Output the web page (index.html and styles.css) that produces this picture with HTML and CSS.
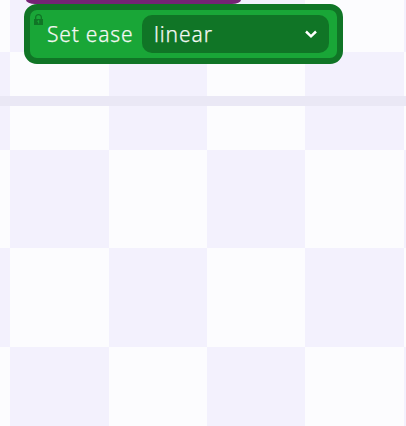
FILE: index.html
```html
<!DOCTYPE html>
<html lang="en">
<head>
<meta charset="utf-8">
<title>Set ease</title>
<link rel="stylesheet" href="styles.css">
</head>
<body>
<main class="canvas">
  <div class="checker">
    <i></i><i></i><i></i><i></i><i></i><i></i><i></i>
    <i></i><i></i><i></i><i></i><i></i><i></i><i></i>
    <i></i><i></i><i></i><i></i><i></i><i></i><i></i>
    <i></i><i></i><i></i><i></i><i></i><i></i><i></i>
    <i></i><i></i><i></i><i></i><i></i><i></i><i></i>
  </div>
  <div class="content">
    <div class="previous-block"></div>
    <section class="block">
      <svg class="lock" viewBox="0 0 9 11"><path d="M0 5h1V3.3C1 1.3 2.5 0 4.5 0S8 1.3 8 3.3V5h1v6H0zM2.3 5h4.4V3.4C6.7 2 5.8 1.2 4.5 1.2S2.3 2 2.3 3.4zM4.2 6.2L3 7.5l1.2.5v1.4h1V6.2z" fill-rule="evenodd"/></svg>
      <span class="label">Set ease</span>
      <button class="select"><span class="value">linear</span><svg class="chevron" viewBox="0 0 12 9"><path d="M1 1.5l5 4.8 5-4.8"/></svg></button>
    </section>
    <div class="divider"></div>
  </div>
</main>
</body>
</html>
```
FILE: styles.css
```css
* { box-sizing: border-box; }
body { margin: 0; overflow: hidden; }
.canvas { position: relative; width: 406px; height: 426px; overflow: hidden; background: #fcfcfe; }
.checker {
  position: absolute;
  inset: 0;
  display: grid;
  grid-template-columns: 10px 99px 98px 98px 99px 98px 98px;
  grid-template-rows: 52px 98px 98px 99px 79px;
}
.checker i { background: #fcfcfe; }
.checker i:nth-child(even) { background: #f3f1fd; }
.content { position: relative; display: flex; flex-direction: column; }
.previous-block {
  width: 215px;
  height: 4px;
  margin-left: 26px;
  background: #752375;
  border-radius: 0 0 9px 9px / 0 0 4px 4px;
}
.block {
  position: relative;
  display: flex;
  align-items: center;
  width: 319px;
  height: 60px;
  margin-left: 24px;
  padding: 0 8px 0 17px;
  border: 6px solid #107526;
  border-radius: 13px;
  background: #19a637;
  color: #f4f8f4;
  font: 300 21px/30px "Noto Sans", sans-serif;
  -webkit-text-stroke: 0.25px #f4f8f4;
}
.lock { position: absolute; left: 4px; top: 4px; width: 9px; height: 11px; fill: #107526; }
.label { width: 95px; flex: none; white-space: nowrap; letter-spacing: 0.8px; }
.select {
  display: flex;
  align-items: center;
  justify-content: space-between;
  width: 187px;
  height: 38px;
  padding: 0 12px;
  border: 0;
  border-radius: 10px;
  background: #107526;
  color: inherit;
  font: inherit;
}
.value { letter-spacing: 0.9px; }
.chevron { width: 12px; height: 9px; fill: none; stroke: #fff; stroke-width: 2.5; }
.divider { height: 10px; margin-top: 32px; background: #eae8f5; }
```
